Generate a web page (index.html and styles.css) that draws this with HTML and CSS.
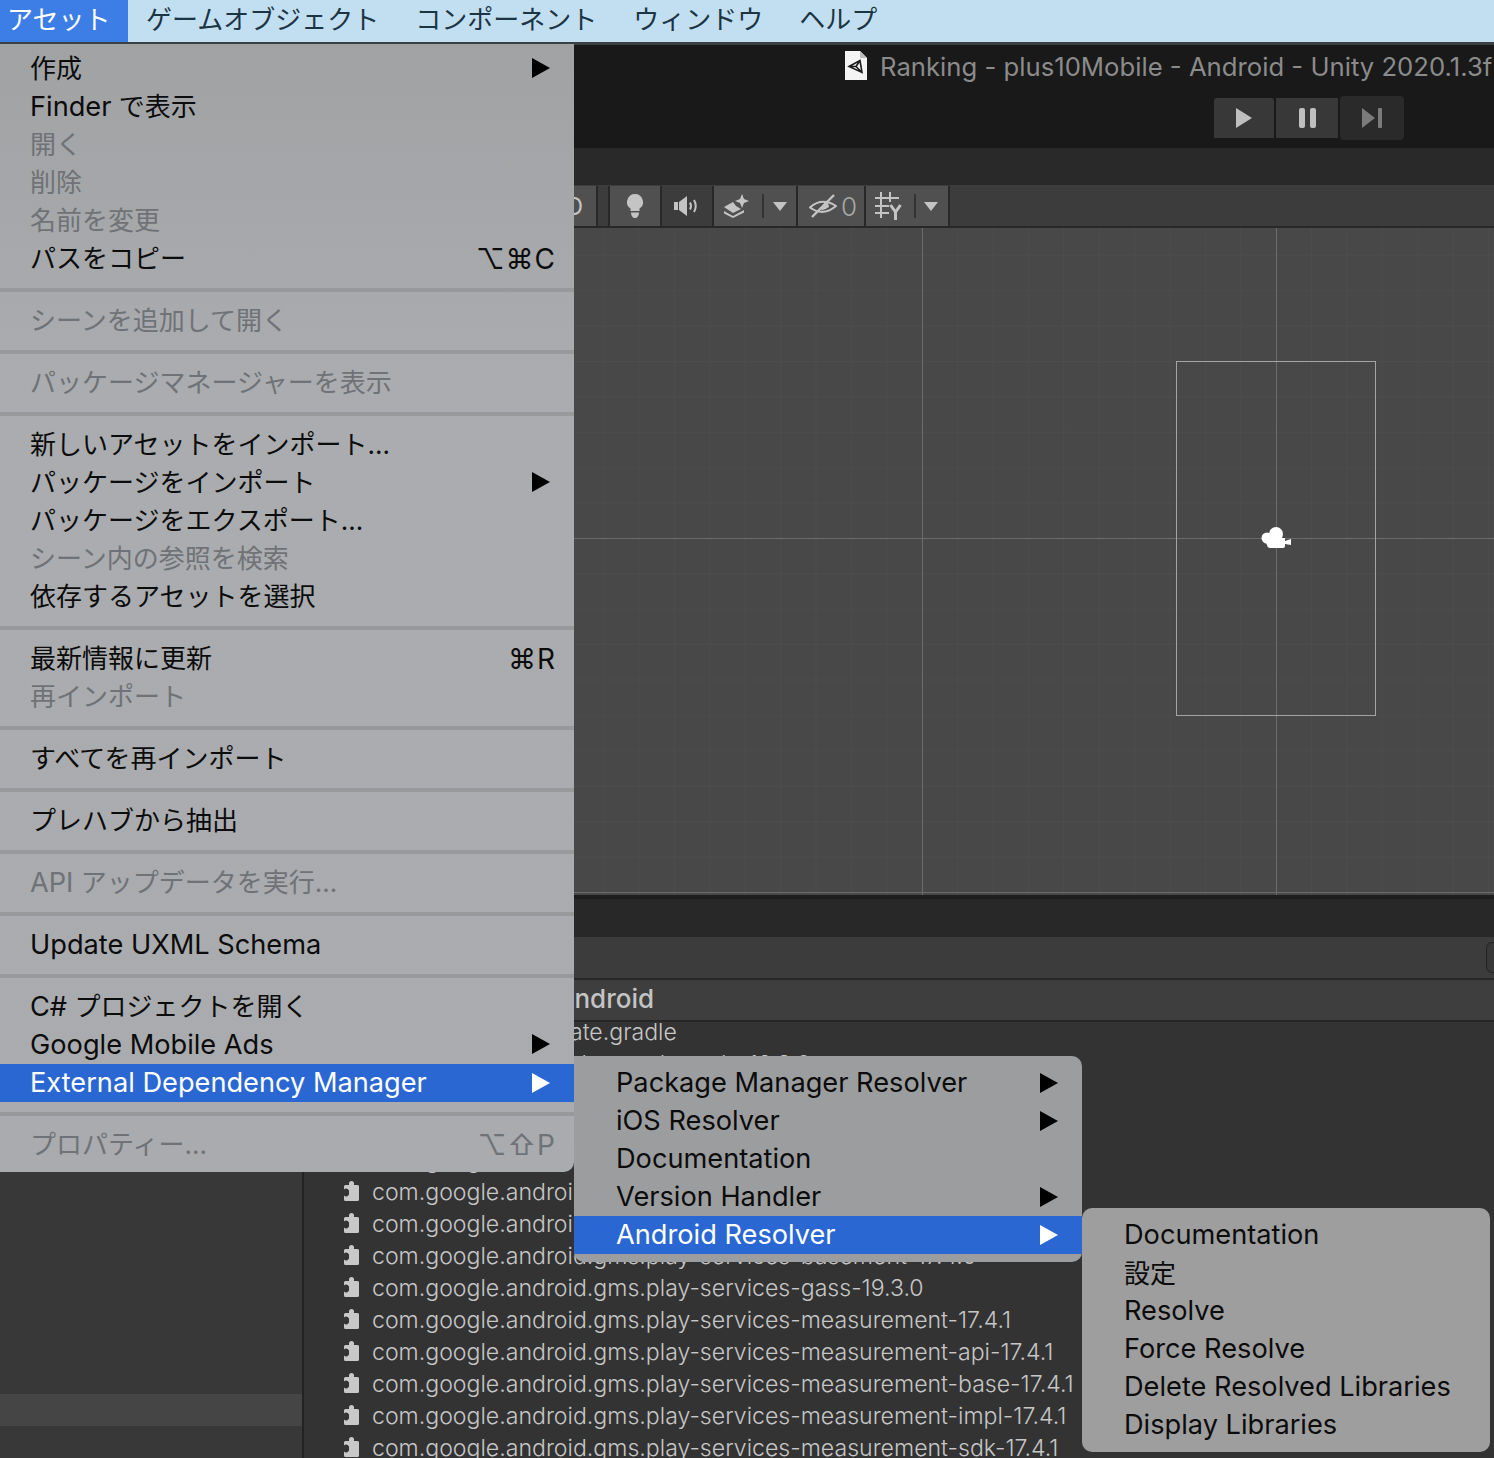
FILE: index.html
```html
<!DOCTYPE html>
<html>
  <head>
    <title>Unity Editor</title>
    <link rel="stylesheet" href="styles.css">
  </head>
  <body>
    <svg class="defs" width="0" height="0">
      <symbol id="pkg" viewBox="0 0 15 20">
        <path d="M5 4V2.5A2.5 2.5 0 0 1 10 2.5V4H13.5Q15 4 15 5.5V18.5Q15 20 13.5 20H1.5Q0 20 0 18.5V14.5A3 3 0 0 0 5 11.5A3 3 0 0 0 0 8.5V5.5Q0 4 1.5 4Z" fill="#c8c8c8"/>
      </symbol>
    </svg>

    <div class="menubar">
      <div class="menubar-item active">アセット</div>
      <div class="menubar-item">ゲームオブジェクト</div>
      <div class="menubar-item">コンポーネント</div>
      <div class="menubar-item">ウィンドウ</div>
      <div class="menubar-item">ヘルプ</div>
    </div>

    <div class="titlebar">
      <div class="title-row">
        <svg class="doc-icon" width="22" height="29" viewBox="0 0 22 29">
          <path d="M0 0H15L22 7V29H0Z" fill="#f4f4f4"/>
          <path d="M15 0L22 7H15Z" fill="#bdbdbd"/>
          <path d="M4 15.5L15 9.5L17 21.5Z M11 15.5L4 15.5M11 15.5L15 9.5M11 15.5L17 21.5" fill="none" stroke="#1d1d1d" stroke-width="1.6"/>
        </svg>
        <span class="title-text">Ranking - plus10Mobile - Android - Unity 2020.1.3f</span>
      </div>
      <div class="play-row">
        <div class="play-btn play"><svg width="16" height="20" viewBox="0 0 16 20"><path d="M0 0L16 10L0 20Z" fill="#bfbfbf"/></svg></div>
        <div class="play-btn pause"><svg width="17" height="20" viewBox="0 0 17 20"><rect width="6" height="20" rx="2" fill="#bfbfbf"/><rect x="11" width="6" height="20" rx="2" fill="#bfbfbf"/></svg></div>
        <div class="play-btn step"><svg width="20" height="20" viewBox="0 0 20 20"><path d="M0 0L13 10L0 20Z" fill="#7b7b7b"/><rect x="16" width="4" height="20" rx="1" fill="#7b7b7b"/></svg></div>
      </div>
    </div>

    <div class="tabbar"></div>

    <div class="toolbar">
      <div class="tool tool-2d">2D</div>
      <div class="tool tool-blank"></div>
      <div class="tool tool-light">
        <svg width="18" height="24" viewBox="0 0 18 24"><path d="M9 0A8 8 0 0 1 13.5 14.6V17H4.5V14.6A8 8 0 0 1 9 0Z" fill="#c4c4c4"/><path d="M5 18.5H13C13 22 11 24 9 24S5 22 5 18.5Z" fill="#c4c4c4"/></svg>
      </div>
      <div class="tool tool-sound">
        <svg width="26" height="20" viewBox="0 0 26 20"><path d="M0 6H4V14H0Z M5 6L13 0V20L5 14Z" fill="#c4c4c4"/><path d="M16 6.5Q18 10 16 13.5M20 4Q23.5 10 20 16" stroke="#c4c4c4" stroke-width="2" fill="none"/></svg>
      </div>
      <div class="tool tool-fx">
        <svg width="26" height="24" viewBox="0 0 26 24"><path d="M18 0L20 5L25 7L20 9L18 14L16 9L11 7L16 5Z" fill="#c4c4c4"/><path d="M0 13L9 8L12 12L17 15L9 19Z" fill="#c4c4c4"/><path d="M0 17L9 22L20 16V18.5L9 24L0 19.5Z" fill="#c4c4c4"/></svg>
        <span class="tool-sep"></span>
        <span class="caret"></span>
      </div>
      <div class="tool tool-eye">
        <svg width="28" height="24" viewBox="0 0 28 24"><path d="M1 13.5Q13 3 27 12Q14 23 1 13.5Z" stroke="#c4c4c4" stroke-width="2" fill="none"/><path d="M16 7A7 7 0 0 1 20 13Q16 16 12 16.5Z" fill="#c4c4c4"/><path d="M3 23L25 1" stroke="#c4c4c4" stroke-width="2.4"/></svg>
        <span class="eye-count">0</span>
      </div>
      <div class="tool tool-gizmo">
        <svg width="27" height="28" viewBox="0 0 27 28"><path d="M6 0V26M15 0V10M0 6H24M0 14H14M0 21H14" stroke="#c4c4c4" stroke-width="2" fill="none"/><path d="M15.5 13L20.5 20L25.5 13M20.5 19V28" stroke="#c4c4c4" stroke-width="3" fill="none"/></svg>
        <span class="tool-sep"></span>
        <span class="caret"></span>
      </div>
    </div>

    <div class="scene">
      <div class="game-frame"></div>
      <svg class="camera" width="30" height="22" viewBox="0 0 30 22">
        <circle cx="15" cy="7" r="7" fill="#fff"/>
        <circle cx="6" cy="11" r="5.5" fill="#fff"/>
        <path d="M5 11H24V19Q24 21 22 21H9Q7.5 21 6.5 19.5L5 16Z" fill="#fff"/>
        <path d="M24 14L30 12V18L24 17Z" fill="#fff"/>
      </svg>
    </div>

    <div class="splitter"></div>
    <div class="panel-search"><span class="search-edge"></span></div>

    <div class="project">
      <div class="tree">
        <div class="tree-spacer"></div>
        <div class="tree-selected"></div>
      </div>
      <div class="files">
        <div class="files-head">Android</div>
        <div class="file file-top">mainTemplate.gradle</div>
        <div class="file file-peek">com.google.android.gms.play-ads-19.3.0</div>
        <div class="file file-hidden"></div>
        <div class="file file-hidden"></div>
        <div class="file file-peek">com.google.android.gms</div>
        <div class="file"><svg class="pkg"><use href="#pkg"/></svg>com.google.android.gms.play-services-ads-19.3.0</div>
        <div class="file"><svg class="pkg"><use href="#pkg"/></svg>com.google.android.gms.play-services-base-17.4.0</div>
        <div class="file"><svg class="pkg"><use href="#pkg"/></svg>com.google.android.gms.play-services-basement-17.4.0</div>
        <div class="file"><svg class="pkg"><use href="#pkg"/></svg>com.google.android.gms.play-services-gass-19.3.0</div>
        <div class="file"><svg class="pkg"><use href="#pkg"/></svg>com.google.android.gms.play-services-measurement-17.4.1</div>
        <div class="file"><svg class="pkg"><use href="#pkg"/></svg>com.google.android.gms.play-services-measurement-api-17.4.1</div>
        <div class="file"><svg class="pkg"><use href="#pkg"/></svg>com.google.android.gms.play-services-measurement-base-17.4.1</div>
        <div class="file"><svg class="pkg"><use href="#pkg"/></svg>com.google.android.gms.play-services-measurement-impl-17.4.1</div>
        <div class="file"><svg class="pkg"><use href="#pkg"/></svg>com.google.android.gms.play-services-measurement-sdk-17.4.1</div>
      </div>
    </div>

    <!-- Assets menu -->
    <div class="menu menu-main">
      <div class="menu-row"><span>作成</span><i class="arrow"></i></div>
      <div class="menu-row"><span><b class="lat">Finder</b> で表示</span></div>
      <div class="menu-row off"><span>開く</span></div>
      <div class="menu-row off"><span>削除</span></div>
      <div class="menu-row off"><span>名前を変更</span></div>
      <div class="menu-row"><span>パスをコピー</span><span class="keys">⌥⌘C</span></div>
      <div class="menu-sep"></div>
      <div class="menu-row off"><span>シーンを追加して開く</span></div>
      <div class="menu-sep"></div>
      <div class="menu-row off"><span>パッケージマネージャーを表示</span></div>
      <div class="menu-sep"></div>
      <div class="menu-row"><span>新しいアセットをインポート...</span></div>
      <div class="menu-row"><span>パッケージをインポート</span><i class="arrow"></i></div>
      <div class="menu-row"><span>パッケージをエクスポート...</span></div>
      <div class="menu-row off"><span>シーン内の参照を検索</span></div>
      <div class="menu-row"><span>依存するアセットを選択</span></div>
      <div class="menu-sep"></div>
      <div class="menu-row"><span>最新情報に更新</span><span class="keys">⌘R</span></div>
      <div class="menu-row off"><span>再インポート</span></div>
      <div class="menu-sep"></div>
      <div class="menu-row"><span>すべてを再インポート</span></div>
      <div class="menu-sep"></div>
      <div class="menu-row"><span>プレハブから抽出</span></div>
      <div class="menu-sep"></div>
      <div class="menu-row off"><span><b class="lat">API</b> アップデータを実行...</span></div>
      <div class="menu-sep"></div>
      <div class="menu-row"><span class="lat">Update UXML Schema</span></div>
      <div class="menu-sep"></div>
      <div class="menu-row"><span><b class="lat">C#</b> プロジェクトを開く</span></div>
      <div class="menu-row"><span class="lat">Google Mobile Ads</span><i class="arrow"></i></div>
      <div class="menu-row on"><span class="lat">External Dependency Manager</span><i class="arrow"></i></div>
      <div class="menu-sep"></div>
      <div class="menu-row off"><span>プロパティー...</span><span class="keys">⌥⇧P</span></div>
    </div>

    <div class="menu menu-sub">
      <div class="menu-row"><span class="lat">Package Manager Resolver</span><i class="arrow"></i></div>
      <div class="menu-row"><span class="lat">iOS Resolver</span><i class="arrow"></i></div>
      <div class="menu-row"><span class="lat">Documentation</span></div>
      <div class="menu-row"><span class="lat">Version Handler</span><i class="arrow"></i></div>
      <div class="menu-row on"><span class="lat">Android Resolver</span><i class="arrow"></i></div>
    </div>

    <div class="menu menu-sub2">
      <div class="menu-row"><span class="lat">Documentation</span></div>
      <div class="menu-row"><span>設定</span></div>
      <div class="menu-row"><span class="lat">Resolve</span></div>
      <div class="menu-row"><span class="lat">Force Resolve</span></div>
      <div class="menu-row"><span class="lat">Delete Resolved Libraries</span></div>
      <div class="menu-row"><span class="lat">Display Libraries</span></div>
    </div>
  </body>
</html>
```

FILE: styles.css
```css
html,
body {
  margin: 0;
  height: 1458px;
  overflow: hidden;
}
body {
  position: relative;
  background-color: #333;
  font-family: Inter, "Noto Sans CJK JP", sans-serif;
}
.defs {
  display: block;
  height: 0;
}

/* menu bar */
.menubar {
  display: flex;
  height: 42px;
  background-color: #c2dff2;
  border-bottom: 3px solid #3b4045;
  font-size: 26px;
  line-height: 40px;
  color: #1c3544;
}
.menubar-item {
  padding: 0 18px;
  white-space: nowrap;
}
.menubar-item.active {
  box-sizing: border-box;
  width: 128px;
  padding: 0 0 0 7px;
  background-color: #3d7de6;
  color: #fff;
}

/* window title and play buttons */
.titlebar {
  height: 103px;
  background-color: #191919;
  overflow: hidden;
}
.title-row {
  display: flex;
  align-items: center;
  gap: 13px;
  height: 41px;
  padding-left: 845px;
  white-space: nowrap;
  font-size: 25.7px;
  color: #8b8b8b;
}
.title-text {
  margin-top: 2px;
}
.doc-icon {
  flex: none;
}
.play-row {
  display: flex;
  align-items: center;
  gap: 2px;
  margin-left: 1214px;
  margin-top: 10px;
}
.play-btn {
  display: flex;
  align-items: center;
  justify-content: center;
  height: 40px;
  background-color: #383838;
}
.play {
  width: 60px;
  border-radius: 3px 3px 0 0;
}
.pause {
  width: 62px;
}
.step {
  width: 64px;
  height: 44px;
  background-color: #2a2a2a;
  border-radius: 4px;
}

.tabbar {
  height: 37px;
  background-color: #292929;
}

/* scene toolbar */
.toolbar {
  display: flex;
  height: 40px;
  padding-top: 1px;
  padding-left: 540px;
  background-color: #3c3c3c;
  border-bottom: 2px solid #282828;
}
.tool {
  display: flex;
  align-items: center;
  justify-content: center;
  flex: none;
  box-sizing: border-box;
  background-color: #505050;
  border-right: 2px solid #282828;
  color: #c4c4c4;
}
.tool-2d {
  width: 58px;
  justify-content: flex-end;
  padding-right: 13px;
  font-size: 24px;
}
.tool-blank {
  width: 12px;
  background-color: #3c3c3c;
}
.tool-light {
  width: 52px;
}
.tool-sound {
  width: 52px;
  background-color: #3c3c3c;
}
.tool-fx {
  width: 84px;
  justify-content: flex-start;
  padding-left: 10px;
}
.tool-fx .tool-sep {
  margin: 0 9px 0 12px;
}
.tool-eye {
  width: 68px;
  justify-content: flex-start;
  padding-left: 11px;
  gap: 4px;
}
.tool-gizmo {
  width: 84px;
  justify-content: flex-start;
  padding-left: 9px;
}
.tool-gizmo .tool-sep {
  margin: 0 8px 0 12px;
}
.tool-sep {
  width: 2px;
  height: 24px;
  background-color: #333;
}
.caret {
  width: 0;
  height: 0;
  border-left: 7px solid transparent;
  border-right: 7px solid transparent;
  border-top: 9px solid #c4c4c4;
}
.eye-count {
  font-size: 26px;
  color: #a8a8a8;
  font-weight: 300;
}

/* scene view */
.scene {
  position: relative;
  height: 667px;
  background-color: #484848;
  background-image:
    linear-gradient(to right, #6c6c6c 1px, transparent 1px),
    linear-gradient(to bottom, #6c6c6c 1px, transparent 1px),
    linear-gradient(to right, #4c4c4c 1px, transparent 1px),
    linear-gradient(to bottom, #4c4c4c 1px, transparent 1px);
  background-size: 354px 354px, 354px 354px, 35.4px 35.4px, 35.4px 35.4px;
  background-position: 214px 0, 0 -44px, 1.6px 0, 0 26.8px;
  overflow: hidden;
}
.game-frame {
  position: absolute;
  left: 1176px;
  top: 133px;
  width: 198px;
  height: 353px;
  border: 1px solid #a4a4a4;
}
.camera {
  position: absolute;
  left: 1261px;
  top: 299px;
}

/* project panel */
.splitter {
  height: 38px;
  background-color: #282828;
  border-top: 4px solid #1d1d1d;
}
.panel-search {
  position: relative;
  height: 41px;
  background-color: #3c3c3c;
  border-bottom: 2px solid #262626;
}
.search-edge {
  position: absolute;
  right: -6px;
  top: 5px;
  width: 12px;
  height: 29px;
  border: 1px solid #222;
  border-radius: 6px;
  background-color: #383838;
}
.project {
  display: flex;
  height: 478px;
}
.tree {
  width: 302px;
  flex: none;
  background-color: #383838;
  border-right: 2px solid #232323;
}
.tree-spacer {
  height: 414px;
}
.tree-selected {
  height: 32px;
  background-color: #454545;
}
.files {
  flex: 1;
  background-color: #333;
  min-width: 0;
}
.files-head {
  height: 40px;
  padding-left: 252px;
  background-color: #3e3e3e;
  border-bottom: 2px solid #262626;
  font-size: 26px;
  font-weight: 500;
  line-height: 38px;
  color: #c4c4c4;
}
.file {
  display: flex;
  align-items: center;
  height: 32px;
  padding-left: 68px;
  white-space: nowrap;
  font-size: 23.1px;
  font-weight: 300;
  color: #c6c6c6;
}
.file-top {
  height: 20px;
  padding-bottom: 6px;
  padding-left: 150px;
}
.file-hidden {
  visibility: hidden;
}
.pkg {
  width: 15px;
  height: 20px;
  margin-left: -28px;
  margin-right: 13px;
  margin-top: -2px;
  flex: none;
}

/* native menus */
.menu {
  position: absolute;
  box-sizing: border-box;
  font-size: 26px;
  color: #0c0c0c;
}
.menu-main {
  left: 0;
  top: 44px;
  width: 574px;
  height: 1128px;
  padding-top: 5px;
  background: linear-gradient(to bottom, #a0a2a4, #aaacaf 30%, #a9abae);
  border-bottom-right-radius: 10px;
}
.menu-main .on {
  margin-top: 1px;
  margin-bottom: -1px;
}
.menu-sub {
  left: 574px;
  top: 1056px;
  width: 508px;
  height: 206px;
  padding-top: 8px;
  background-color: #9c9d9f;
  border-radius: 0 10px 10px 10px;
}
.menu-sub2 {
  left: 1082px;
  top: 1208px;
  width: 408px;
  height: 244px;
  padding-top: 8px;
  background-color: #9e9e9e;
  border-radius: 10px;
}
.menu-row {
  display: flex;
  align-items: center;
  justify-content: space-between;
  height: 38px;
  padding: 0 24px 0 30px;
  white-space: nowrap;
}
.menu-row > span {
  line-height: 36px;
  margin-top: 2px;
}
.menu-row > .lat {
  margin-top: 1px;
}
.menu-sub .menu-row > .lat,
.menu-sub2 .menu-row > .lat,
.menu-main .on > .lat {
  margin-top: 0;
}
.lat {
  font-size: 27.2px;
  font-weight: 400;
}
.menu-sub .menu-row,
.menu-sub2 .menu-row {
  padding-left: 42px;
}
.menu-row.off {
  color: #6f7276;
}
.menu-row.on {
  background-color: #2a67d3;
  color: #fff;
}
.menu-sep {
  height: 4px;
  margin: 11px 0 9px;
  background-color: #97999b;
}
.arrow {
  width: 0;
  height: 0;
  border-left: 18px solid #000;
  border-top: 10px solid transparent;
  border-bottom: 10px solid transparent;
}
.on .arrow {
  border-left-color: #fff;
}
.keys {
  margin-right: -6px;
  font-family: Inter, "DejaVu Sans", sans-serif;
  font-size: 28px;
  letter-spacing: 1px;
}
```
